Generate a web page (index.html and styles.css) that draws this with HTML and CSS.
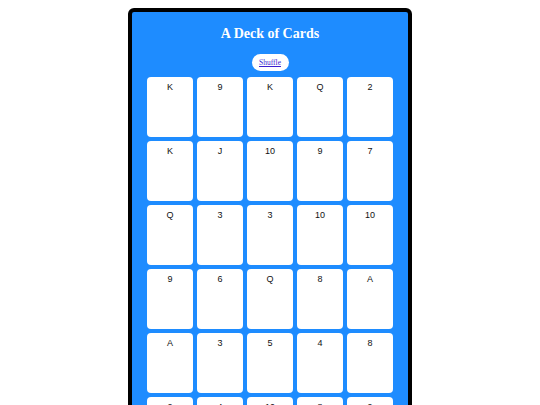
FILE: index.html
```html
<!DOCTYPE html>
<html>
<head>
<meta charset="utf-8">
<link rel="stylesheet" href="styles.css">
</head>
<body>
<div class="deck">
  <h1 class="title">A Deck of Cards</h1>
  <div class="actions"><button class="shuffle"><a href="#">Shuffle</a></button></div>
  <div class="cards">
    <div class="card">K</div><div class="card">9</div><div class="card">K</div><div class="card">Q</div><div class="card">2</div>
    <div class="card">K</div><div class="card">J</div><div class="card">10</div><div class="card">9</div><div class="card">7</div>
    <div class="card">Q</div><div class="card">3</div><div class="card">3</div><div class="card">10</div><div class="card">10</div>
    <div class="card">9</div><div class="card">6</div><div class="card">Q</div><div class="card">8</div><div class="card">A</div>
    <div class="card">A</div><div class="card">3</div><div class="card">5</div><div class="card">4</div><div class="card">8</div>
    <div class="card">2</div><div class="card">4</div><div class="card">10</div><div class="card">8</div><div class="card">9</div>
    <div class="card">J</div><div class="card">5</div><div class="card">7</div><div class="card">6</div><div class="card">2</div>
    <div class="card">A</div><div class="card">J</div><div class="card">4</div><div class="card">Q</div><div class="card">7</div>
    <div class="card">5</div><div class="card">6</div><div class="card">K</div><div class="card">3</div><div class="card">J</div>
    <div class="card">8</div><div class="card">2</div><div class="card">A</div><div class="card">7</div><div class="card">6</div>
    <div class="card">5</div><div class="card">4</div>
  </div>
</div>
</body>
</html>
```
FILE: styles.css
```css
html, body {
  margin: 0;
  padding: 0;
  background: #ffffff;
}
body {
  padding-top: 8px;
}
.deck {
  width: 276px;
  margin: 0 auto;
  background: #1e8cff;
  border: 4px solid #000;
  border-radius: 6px;
  padding-top: 12px;
  padding-bottom: 20px;
}
.title {
  margin: 0 0 10px 0;
  font-family: "Liberation Serif", serif;
  font-weight: bold;
  font-size: 14px;
  line-height: 20px;
  color: #fff;
  text-align: center;
}
.actions {
  display: flex;
  justify-content: center;
  margin-bottom: 4px;
}
.shuffle {
  width: 37px;
  height: 17px;
  padding: 0;
  border: none;
  border-radius: 9px;
  background: #fff;
  font-family: "Liberation Serif", serif;
  font-size: 7.5px;
  line-height: 17px;
}
.shuffle a {
  color: #3b1fd0;
  text-decoration: underline;
}
.cards {
  width: 250px;
  margin: 0 auto;
  display: flex;
  flex-wrap: wrap;
}
.card {
  width: 46px;
  height: 60px;
  margin: 2px;
  box-sizing: border-box;
  background: #fff;
  border-radius: 4px;
  padding-top: 5px;
  text-align: center;
  font-family: "Liberation Sans", Arial, sans-serif;
  font-size: 9px;
  line-height: 11px;
  color: #111;
}
```
